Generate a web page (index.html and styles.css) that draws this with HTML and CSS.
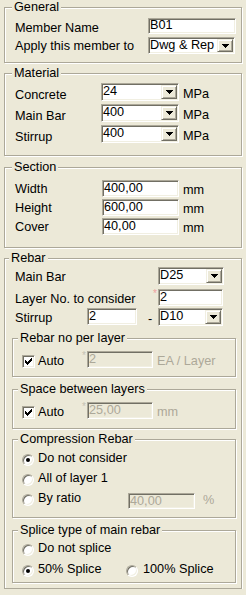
FILE: index.html
```html
<!DOCTYPE html>
<html lang="en">
	<head>
		<meta charset="UTF-8" />
		<title>Beam Member</title>
		<link rel="stylesheet" href="styles.css">
	</head>
	<body>
		<div class="dlg">
			<fieldset class="grp general">
				<legend>General</legend>
				<div class="row">
					<label class="lbl">Member Name</label>
					<input class="edit" type="text" value="B01" />
				</div>
				<div class="row">
					<label class="lbl">Apply this member to</label>
					<div class="combo"><span class="val">Dwg &amp; Rep</span><span class="drop"><svg width="7" height="4"><path d="M0 0h7v1H0zM1 1h5v1H1zM2 2h3v1H2zM3 3h1v1H3z" /></svg></span></div>
				</div>
			</fieldset>

			<fieldset class="grp material">
				<legend>Material</legend>
				<div class="row">
					<label class="lbl">Concrete</label>
					<div class="combo"><span class="val">24</span><span class="drop"><svg width="7" height="4"><path d="M0 0h7v1H0zM1 1h5v1H1zM2 2h3v1H2zM3 3h1v1H3z" /></svg></span></div>
					<span class="unit">MPa</span>
				</div>
				<div class="row">
					<label class="lbl">Main Bar</label>
					<div class="combo"><span class="val">400</span><span class="drop"><svg width="7" height="4"><path d="M0 0h7v1H0zM1 1h5v1H1zM2 2h3v1H2zM3 3h1v1H3z" /></svg></span></div>
					<span class="unit">MPa</span>
				</div>
				<div class="row">
					<label class="lbl">Stirrup</label>
					<div class="combo"><span class="val">400</span><span class="drop"><svg width="7" height="4"><path d="M0 0h7v1H0zM1 1h5v1H1zM2 2h3v1H2zM3 3h1v1H3z" /></svg></span></div>
					<span class="unit">MPa</span>
				</div>
			</fieldset>

			<fieldset class="grp section">
				<legend>Section</legend>
				<div class="row">
					<label class="lbl">Width</label>
					<input class="edit" type="text" value="400,00" />
					<span class="unit">mm</span>
				</div>
				<div class="row">
					<label class="lbl">Height</label>
					<input class="edit" type="text" value="600,00" />
					<span class="unit">mm</span>
				</div>
				<div class="row">
					<label class="lbl">Cover</label>
					<input class="edit" type="text" value="40,00" />
					<span class="unit">mm</span>
				</div>
			</fieldset>

			<fieldset class="grp rebar">
				<legend>Rebar</legend>
				<div class="row main-bar">
					<label class="lbl">Main Bar</label>
					<div class="combo"><span class="val">D25</span><span class="drop"><svg width="7" height="4"><path d="M0 0h7v1H0zM1 1h5v1H1zM2 2h3v1H2zM3 3h1v1H3z" /></svg></span></div>
				</div>
				<div class="row layer-no">
					<label class="lbl">Layer No. to consider</label>
					<span class="req">*</span>
					<input class="edit" type="text" value="2" />
				</div>
				<div class="row stirrup">
					<label class="lbl">Stirrup</label>
					<input class="edit" type="text" value="2" />
					<span class="dash">-</span>
					<div class="combo"><span class="val">D10</span><span class="drop"><svg width="7" height="4"><path d="M0 0h7v1H0zM1 1h5v1H1zM2 2h3v1H2zM3 3h1v1H3z" /></svg></span></div>
				</div>

				<fieldset class="grp sub per-layer">
					<legend>Rebar no per layer</legend>
					<div class="row">
						<span class="auto"><span class="chk"><svg width="7" height="7"><path d="M0 2h1v1h1v1h1V3h1V2h1V1h1V0h1v3H6v1H5v1H4v1H3v1H2V6H1V5H0z" /></svg></span><label class="lbl">Auto</label></span>
						<span class="req off">*</span>
						<input class="edit" type="text" value="2" disabled />
						<span class="unit off">EA / Layer</span>
					</div>
				</fieldset>

				<fieldset class="grp sub spacing">
					<legend>Space between layers</legend>
					<div class="row">
						<span class="auto"><span class="chk"><svg width="7" height="7"><path d="M0 2h1v1h1v1h1V3h1V2h1V1h1V0h1v3H6v1H5v1H4v1H3v1H2V6H1V5H0z" /></svg></span><label class="lbl">Auto</label></span>
						<span class="req off">*</span>
						<input class="edit" type="text" value="25,00" disabled />
						<span class="unit off">mm</span>
					</div>
				</fieldset>

				<fieldset class="grp sub compression">
					<legend>Compression Rebar</legend>
					<div class="opt">
						<span class="rad on"></span><label class="lbl">Do not consider</label>
					</div>
					<div class="opt">
						<span class="rad"></span><label class="lbl">All of layer 1</label>
					</div>
					<div class="opt">
						<span class="rad"></span><label class="lbl ratio">By ratio</label>
						<input class="edit" type="text" value="40,00" disabled />
						<span class="unit off">%</span>
					</div>
				</fieldset>

				<fieldset class="grp sub splice">
					<legend>Splice type of main rebar</legend>
					<div class="opt">
						<span class="rad"></span><label class="lbl">Do not splice</label>
					</div>
					<div class="opt">
						<span class="rad on"></span><label class="lbl half">50% Splice</label>
						<span class="rad"></span><label class="lbl full">100% Splice</label>
					</div>
				</fieldset>
			</fieldset>
		</div>
	</body>
</html>
```

FILE: styles.css
```css
* {
	box-sizing: border-box;
}
body {
	margin: 0;
	background-color: #ece9d8;
	font-family: "Liberation Sans", Arial, sans-serif;
	font-size: 12.7px;
	line-height: 13px;
	color: #000;
}
.dlg {
	padding: 1px 4px 0 4px;
}

/* group boxes */
.grp {
	margin: 0;
	min-width: 0;
	padding: 0 5px 0 10px;
	border: 1px solid #aca899;
	box-shadow: inset 1px 1px 0 #fff, 1px 1px 0 #fff;
}
.grp legend {
	margin-left: -3px;
	padding: 0 2px;
	line-height: 13px;
	background-color: #ece9d8;
}
.general {
	padding-top: 4px;
	padding-bottom: 8px;
}
.material {
	margin-top: 4px;
	padding-top: 3px;
	padding-bottom: 12px;
}
.section {
	margin-top: 5px;
	padding-top: 6px;
	padding-bottom: 12px;
}
.rebar {
	margin-top: 4px;
	padding: 2px 5px 5px 7px;
}
.sub {
	padding-left: 9px;
	padding-right: 0;
}
.sub legend {
	margin-left: -4px;
}
.per-layer {
	margin-top: 6px;
	padding-top: 6px;
	padding-bottom: 8px;
}
.spacing {
	margin-top: 6px;
	padding-top: 6px;
	padding-bottom: 9px;
}
.compression {
	margin-top: 4px;
	padding-top: 5px;
	padding-bottom: 9px;
}
.splice {
	margin-top: 6px;
	padding-top: 4px;
	padding-bottom: 3px;
}

/* rows */
.row {
	display: flex;
	align-items: flex-start;
	height: 17px;
}
.lbl {
	white-space: nowrap;
	line-height: 13px;
}
.unit {
	margin-left: 4px;
	white-space: nowrap;
}
.off {
	color: #aca899;
}

.general .row {
	height: 16px;
}
.general .row + .row {
	height: 17px;
	margin-top: 3px;
}
.general .lbl {
	width: 133px;
	margin-top: 4px;
}
.general .row + .row .lbl {
	margin-top: 3px;
}
.general .edit {
	width: 88px;
	height: 16px;
}
.general .combo {
	width: 87px;
	height: 17px;
}

.material .row {
	height: 18px;
}
.material .row + .row {
	margin-top: 3px;
}
.material .lbl {
	width: 86px;
	margin-top: 6px;
}
.material .unit {
	margin-top: 5px;
}
.material .combo {
	width: 78px;
}

.section .row + .row {
	margin-top: 2px;
}
.section .lbl {
	width: 87px;
	margin-top: 3px;
}
.section .unit {
	margin-top: 4px;
}
.section .edit {
	width: 77px;
}

.rebar > .row {
	padding-left: 3px;
}
.rebar > .row .lbl {
	margin-top: 4px;
}
.main-bar {
	height: 18px;
}
.main-bar .lbl {
	width: 143px;
}
.main-bar .combo {
	width: 66px;
}
.layer-no {
	margin-top: 4px;
}
.layer-no .lbl {
	width: 137px;
}
.layer-no .edit {
	width: 65px;
}
.rebar > .stirrup {
	height: 18px;
	margin-top: 2px;
}
.stirrup .lbl {
	width: 72px;
}
.stirrup .edit {
	width: 50px;
}
.stirrup .combo {
	width: 65px;
}
.dash {
	width: 21px;
	padding-left: 11px;
	margin-top: 5px;
}

.req {
	width: 6px;
	font-size: 10px;
	line-height: 10px;
	color: #f0a0a0;
	padding-left: 1px;
}
.req.off {
	width: 5px;
	padding-left: 0;
	color: #c4c1b4;
}

.auto {
	display: flex;
	align-items: flex-start;
	width: 60px;
}
.auto .lbl {
	margin-left: 3px;
	margin-top: 4px;
}
.sub .row .edit {
	width: 66px;
}
.sub .row .unit {
	margin-top: 4px;
}

/* edit boxes */
.edit {
	display: block;
	height: 17px;
	margin: 0;
	padding: 0 1px 2px;
	border: 1px solid;
	border-color: #aca899 #fff #fff #aca899;
	box-shadow: inset 1px 1px 0 #716f64, inset -1px -1px 0 #f1efe2;
	background-color: #fff;
	font: inherit;
	line-height: 13px;
	color: #000;
	outline: none;
}
.edit:disabled {
	background-color: #ece9d8;
	color: #aca899;
}

/* combo boxes */
.combo {
	display: flex;
	flex: none;
	height: 18px;
	padding: 1px;
	border: 1px solid;
	border-color: #aca899 #fff #fff #aca899;
	box-shadow: inset 1px 1px 0 #716f64, inset -1px -1px 0 #f1efe2;
	background-color: #fff;
}
.combo .val {
	flex: 1;
	white-space: nowrap;
	overflow: hidden;
}
.drop {
	display: flex;
	align-items: center;
	justify-content: center;
	width: 16px;
	border: 1px solid;
	border-color: #f1efe2 #716f64 #716f64 #f1efe2;
	box-shadow: inset 1px 1px 0 #fff, inset -1px -1px 0 #aca899;
	background-color: #ece9d8;
}
.drop svg {
	display: block;
	margin-left: 1px;
}

/* check box */
.chk {
	display: flex;
	align-items: center;
	justify-content: center;
	flex: none;
	width: 13px;
	height: 13px;
	margin-top: 4px;
	border: 1px solid;
	border-color: #aca899 #fff #fff #aca899;
	box-shadow: inset 1px 1px 0 #716f64, inset -1px -1px 0 #f1efe2;
	background-color: #fff;
}
.chk svg {
	display: block;
}

/* radio buttons */
.opt {
	display: flex;
	align-items: flex-start;
	height: 17px;
}
.compression .opt + .opt {
	margin-top: 3px;
}
.splice .opt + .opt {
	margin-top: 4px;
}
.rad {
	display: flex;
	align-items: center;
	justify-content: center;
	flex: none;
	width: 12px;
	height: 12px;
	margin-top: 3px;
	border: 1px solid;
	border-color: #aca899 #fff #fff #aca899;
	border-radius: 50%;
	box-shadow: inset 1px 1px 0 #716f64, inset -1px -1px 0 #f1efe2;
	background-color: #fff;
}
.rad.on::after {
	content: "";
	width: 4px;
	height: 4px;
	border-radius: 50%;
	background-color: #000;
}
.opt .lbl {
	margin-left: 4px;
	margin-top: 1px;
}
.opt .ratio {
	width: 90px;
}
.opt .edit {
	width: 67px;
	height: 16px;
	margin-top: 2px;
	padding-bottom: 1px;
}
.opt .unit {
	margin-left: 8px;
	margin-top: 3px;
}
.opt .half {
	width: 88px;
}
.opt .full {
	margin-left: 5px;
}
```
